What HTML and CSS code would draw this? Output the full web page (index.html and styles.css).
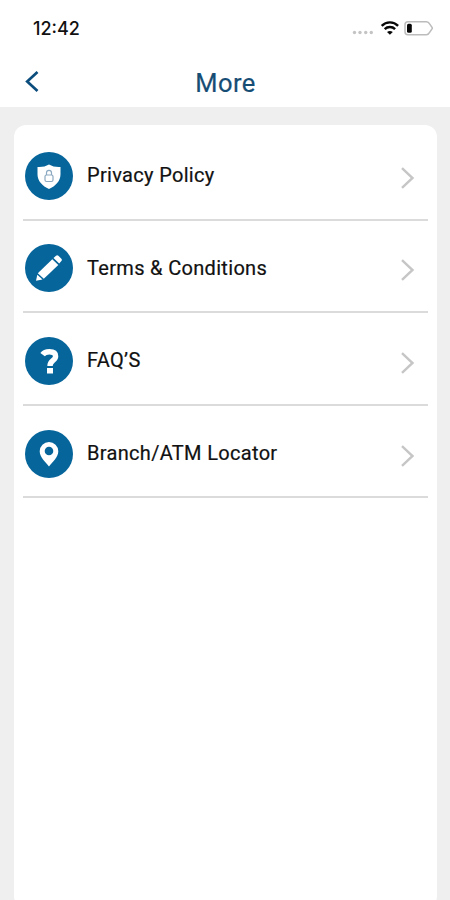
FILE: index.html
```html
<!DOCTYPE html>
<html lang="en">
<head>
<meta charset="utf-8">
<title>More</title>
<link rel="stylesheet" href="styles.css">
</head>
<body>
<div class="screen">
  <div class="status">
    <span class="time">12:42</span>
    <svg class="indicators" width="82" height="18" viewBox="0 0 82 18">
      <g fill="#c4c4c4"><circle cx="3.500" cy="13.500" r="1.700"/><circle cx="9" cy="13.500" r="1.700"/><circle cx="14.700" cy="13.500" r="1.700"/><circle cx="20.300" cy="13.500" r="1.700"/></g>
      <g fill="none" stroke="#080808" stroke-width="2.400"><path d="M30.700 6.800a11.500 11.500 0 0 1 16.400 0"/><path d="M33.700 10.200a7.400 7.400 0 0 1 10.400 0"/></g>
      <path d="M36 13q2.900-2.200 5.800 0L38.900 15.800z" fill="#080808"/>
      <path d="M57 3H75.500Q77.500 3 78.800 5.500L81.500 9.500 78.800 13.500Q77.500 16 75.500 16H57Q54 16 54 13V6Q54 3 57 3z" transform="translate(0 -.3)" fill="#fff" stroke="#bcbcbc" stroke-width="1.500"/>
      <rect x="56" y="4.700" width="4.800" height="9" rx="1.500" fill="#080808"/>
    </svg>
  </div>
  <header class="bar">
    <svg class="back" width="16" height="24" viewBox="0 0 16 24"><path d="M13.500 2 3.200 11.500l10.300 9.500" fill="none" stroke="#0b4d7c" stroke-width="2.700"/></svg>
    <h1>More</h1>
  </header>
  <main class="content">
    <ul class="card">
      <li class="row">
        <span class="icon"><svg width="48" height="48" viewBox="0 0 48 48"><path d="M24 12.500q5 3 11.500 2.500v7.500c0 6.500-5 11.500-11.500 14.500-6.500-3-11.500-8-11.500-14.500V15q6.500.5 11.500-2.500z" fill="#fff"/><g fill="none" stroke="#8ba9c0" stroke-width="1.200"><rect x="20" y="23" width="8" height="6.500" rx="1.500"/><path d="M21.500 23v-2.200a2.500 2.500 0 0 1 5 0V23"/></g></svg></span>
        <span class="label">Privacy Policy</span>
        <svg class="next" width="16" height="24" viewBox="0 0 16 24"><path d="M2 2.200 12.500 12 2 21.800" /></svg>
      </li>
      <li class="row">
        <span class="icon"><svg width="48" height="48" viewBox="0 0 48 48"><g fill="#fff"><path d="M12.800 29.200 27.300 15.300 33.300 21 18.800 34.800z"/><path d="M28.500 14 31 11.800q1.200-1 2.400 0l3 2.900q1.200 1.200 0 2.400l-2.200 2.400z"/><path d="M12.300 30.800 17.500 35.600 11 36.800z"/></g></svg></span>
        <span class="label">Terms &amp; Conditions</span>
        <svg class="next" width="16" height="24" viewBox="0 0 16 24"><path d="M2 2.200 12.500 12 2 21.800" /></svg>
      </li>
      <li class="row">
        <span class="icon"><svg width="48" height="48" viewBox="0 0 48 48"><path d="M17.600 17.600q2-2.900 6.800-2.900c4 0 6.200 1.700 6.200 4.500 0 4.600-5.600 4-5.600 9.800" fill="none" stroke="#fff" stroke-width="5.400"/><rect x="22" y="31" width="6" height="5.500" fill="#fff"/></svg></span>
        <span class="label">FAQ’S</span>
        <svg class="next" width="16" height="24" viewBox="0 0 16 24"><path d="M2 2.200 12.500 12 2 21.800" /></svg>
      </li>
      <li class="row">
        <span class="icon"><svg width="48" height="48" viewBox="0 0 48 48"><path fill="#fff" fill-rule="evenodd" d="M24 12a9.300 9.300 0 0 0-9.300 9.300c0 6 5.800 10.700 9.300 15.200 3.500-4.500 9.300-9.200 9.300-15.200A9.300 9.300 0 0 0 24 12zm0 4.700a4.300 4.300 0 1 1 0 8.600 4.300 4.300 0 0 1 0-8.600z"/></svg></span>
        <span class="label">Branch/ATM Locator</span>
        <svg class="next" width="16" height="24" viewBox="0 0 16 24"><path d="M2 2.200 12.500 12 2 21.800" /></svg>
      </li>
    </ul>
  </main>
</div>
</body>
</html>
```
FILE: styles.css
```css
* {
  box-sizing: border-box;
}

body {
  margin: 0;
  background: #fff;
  font-family: Roboto, "Liberation Sans", sans-serif;
}

.screen {
  display: flex;
  flex-direction: column;
  height: 900px;
  overflow: hidden;
}

.status {
  display: flex;
  flex: none;
  align-items: center;
  justify-content: space-between;
  height: 56px;
  padding: 0 17.500px 0 33px;
}

.time {
  padding-top: 1px;
  color: #111;
  font: 500 18px/24px Inter, sans-serif;
}

.bar {
  display: grid;
  flex: none;
  grid-template-columns: 60px 1fr 60px;
  align-items: center;
  height: 51px;
}

.back {
  margin-left: 24px;
}

h1 {
  margin: 0;
  padding: 2px 0 0 1px;
  color: #164d75;
  font-size: 25.500px;
  font-weight: 400;
  letter-spacing: 0.4px;
  line-height: 32px;
  text-align: center;
  -webkit-text-stroke: 0.2px #164d75;
}

.content {
  flex: 1;
  padding: 18px 13.500px 0 14px;
  background: #efefef;
}

.card {
  height: 783px;
  margin: 0;
  padding: 3px 8.500px 0 8.500px;
  border-radius: 12px;
  background: #fff;
  list-style: none;
}

.row {
  display: flex;
  align-items: center;
  height: 92.600px;
  padding: 5px 12.500px 0 2.500px;
  border-bottom: 2px solid #dbdbdb;
}

.icon {
  width: 48px;
  height: 48px;
  margin-right: 14px;
  border-radius: 50%;
  background: #06659b;
}

.icon svg {
  display: block;
}

.label {
  flex: 1;
  padding-bottom: 1px;
  color: #111;
  font-size: 20px;
  letter-spacing: 0.32px;
  line-height: 26px;
  -webkit-text-stroke: 0.2px #111;
}

.next {
  position: relative;
  top: 2px;
  fill: none;
  stroke: #c6c6c6;
  stroke-width: 2.400;
}
```
